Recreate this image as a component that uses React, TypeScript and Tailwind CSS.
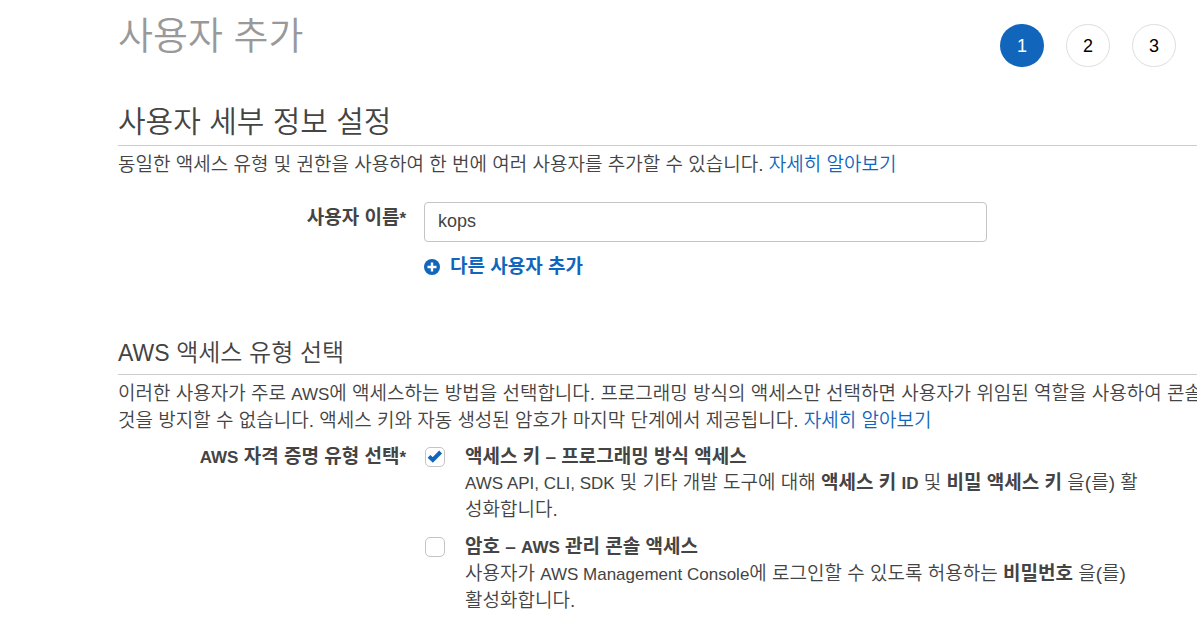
import { ReactNode, useState } from 'react';

function More() {
  return <a href="#more" className="text-[#1166bb]">자세히 알아보기</a>;
}

function En({ children }: { children: ReactNode }) {
  return <span className="text-[17px]">{children}</span>;
}

function Option({ id, title, checked, children }: { id: string; title: ReactNode; checked: boolean; children: ReactNode }) {
  const [on, setOn] = useState(checked);
  return (
    <div className="flex items-start gap-5">
      <span className="relative mt-[3px] h-5 w-5 shrink-0">
        <input id={id} type="checkbox" checked={on} onChange={() => setOn(!on)} className="block h-5 w-5 appearance-none rounded-[5px] border border-[#c4c4c4] bg-white" />
        {on && (
          <svg viewBox="0 0 20 20" className="pointer-events-none absolute inset-0 h-5 w-5" fill="none" stroke="#1166bb" strokeWidth="4">
            <path d="M4 9.4 L7.8 13 L15.6 5" />
          </svg>
        )}
      </span>
      <div className="min-w-0 flex-1">
        <label htmlFor={id} className="block font-bold">{title}</label>
        <p>{children}</p>
      </div>
    </div>
  );
}

export default function App() {
  return (
    <main className="overflow-hidden bg-white pl-[118px] font-['Liberation_Sans','Noto_Sans_CJK_KR',sans-serif] text-[19px] leading-[26px] font-[350] text-[#444444]">
      <header className="flex items-start justify-between pr-[21px]">
        <h1 className="pt-3 text-[38px] leading-[48px] font-[350] text-[#999999]">사용자 추가</h1>
        <ol className="flex gap-[22px] pt-6 text-[18px] text-black">
          <li className="flex h-[43px] w-11 items-center justify-center rounded-full bg-[#1166bb] text-white">1</li>
          <li className="flex h-[43px] w-11 items-center justify-center rounded-full border border-[#dddddd]">2</li>
          <li className="flex h-[43px] w-11 items-center justify-center rounded-full border border-[#dddddd]">3</li>
        </ol>
      </header>

      <section className="pt-9">
        <h2 className="border-b border-[#cccccc] pb-1 text-[30px] leading-[38px] font-[350]">사용자 세부 정보 설정</h2>
        <p className="pt-[6px] whitespace-nowrap">동일한 액세스 유형 및 권한을 사용하여 한 번에 여러 사용자를 추가할 수 있습니다. <More /></p>
        <div className="flex items-start gap-[18px] pt-6">
          <label htmlFor="username" className="w-[288px] pt-[3px] text-right font-bold">사용자 이름<En>*</En></label>
          <div>
            <input id="username" defaultValue="kops" className="block h-10 w-[563px] rounded border border-[#c4c4c4] px-[13px] pb-[2px] text-[18px]" />
            <button type="button" className="mt-3 flex items-center gap-[10px] font-bold text-[#1166bb]">
              <svg viewBox="0 0 16 16" className="h-4 w-4">
                <circle cx="8" cy="8" r="8" fill="#1166bb" />
                <path d="M8 3.5V12.5M3.5 8H12.5" stroke="white" strokeWidth="2.4" />
              </svg>
              다른 사용자 추가
            </button>
          </div>
        </div>
      </section>

      <section className="pt-[56px]">
        <h2 className="border-b border-[#cccccc] pb-1 text-[24px] leading-[34px] font-[350]"><span className="text-[23px]">AWS</span> 액세스 유형 선택</h2>
        <p className="pt-[6px] whitespace-nowrap">
          이러한 사용자가 주로 <En>AWS</En>에 액세스하는 방법을 선택합니다. 프로그래밍 방식의 액세스만 선택하면 사용자가 위임된 역할을 사용하여 콘솔
          <br />
          것을 방지할 수 없습니다. 액세스 키와 자동 생성된 암호가 마지막 단계에서 제공됩니다. <More />
        </p>
        <div className="flex items-start gap-[19px] pt-[10px]">
          <h3 className="w-[288px] shrink-0 text-right font-bold"><En>AWS</En> 자격 증명 유형 선택<En>*</En></h3>
          <div className="flex max-w-[740px] flex-1 flex-col gap-[11px]">
            <Option id="key" title="액세스 키 – 프로그래밍 방식 액세스" checked>
              <En>AWS API, CLI, SDK</En> 및 기타 개발 도구에 대해 <b>액세스 키 <En>ID</En></b> 및 <b>비밀 액세스 키</b> 을(를) 활<br />성화합니다.
            </Option>
            <Option id="password" title={<>암호 – <En>AWS</En> 관리 콘솔 액세스</>} checked={false}>
              사용자가 <En>AWS Management Console</En>에 로그인할 수 있도록 허용하는 <b>비밀번호</b> 을(를)<br />활성화합니다.
            </Option>
          </div>
        </div>
      </section>
    </main>
  );
}
